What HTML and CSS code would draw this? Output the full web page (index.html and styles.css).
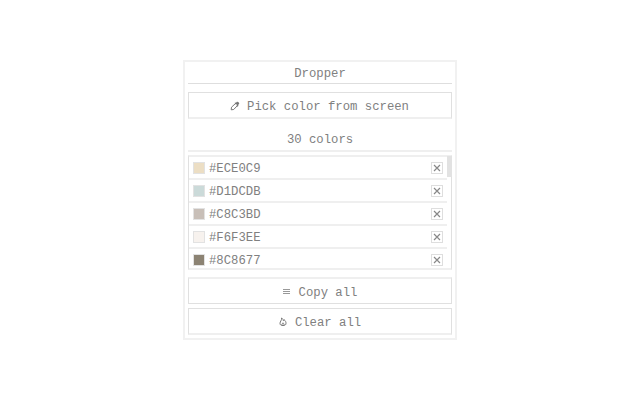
FILE: index.html
```html
<!DOCTYPE html>
<html lang="en">

<head>
    <meta charset="UTF-8">
    <meta name="viewport" content="width=device-width, initial-scale=1.0">
    <link rel="stylesheet" href="styles.css">
    <title>Dropper</title>
</head>

<body>
    <div class="popup">
        <h1 class="title">Dropper</h1>
        <button class="button pick">
            <svg class="icon" viewBox="0 0 10 10">
                <path d="M1.2 8.8l.3-2.6L6 2l2 2-4.3 4.5L1.2 8.8z" />
                <path class="solid" d="M4.8 1.6l1.2.1.9-.9c.8-.7 2.9 1.2 2.2 2.1l-.9.9.1 1.2-.8.8-1-1 .5-.8-1-1-.8.5z" />
            </svg>
            <span>Pick color from screen</span>
        </button>
        <h2 class="count">30 colors</h2>
        <div class="list">
            <ul class="colors">
                <li class="color">
                    <span class="swatch" style="background-color: #ECDEC4"></span>
                    <span class="hex">#ECE0C9</span>
                    <button class="remove"><svg viewBox="0 0 8 8"><path d="M1 1l6 6M7 1L1 7" /></svg></button>
                </li>
                <li class="color">
                    <span class="swatch" style="background-color: #CBDAD9"></span>
                    <span class="hex">#D1DCDB</span>
                    <button class="remove"><svg viewBox="0 0 8 8"><path d="M1 1l6 6M7 1L1 7" /></svg></button>
                </li>
                <li class="color">
                    <span class="swatch" style="background-color: #C8BFB8"></span>
                    <span class="hex">#C8C3BD</span>
                    <button class="remove"><svg viewBox="0 0 8 8"><path d="M1 1l6 6M7 1L1 7" /></svg></button>
                </li>
                <li class="color">
                    <span class="swatch" style="background-color: #F7F2EE"></span>
                    <span class="hex">#F6F3EE</span>
                    <button class="remove"><svg viewBox="0 0 8 8"><path d="M1 1l6 6M7 1L1 7" /></svg></button>
                </li>
                <li class="color">
                    <span class="swatch" style="background-color: #8C8373"></span>
                    <span class="hex">#8C8677</span>
                    <button class="remove"><svg viewBox="0 0 8 8"><path d="M1 1l6 6M7 1L1 7" /></svg></button>
                </li>
            </ul>
            <div class="scrollbar">
                <div class="thumb"></div>
            </div>
        </div>
        <button class="button copy">
            <svg class="icon lines" viewBox="0 0 10 10">
                <path d="M1 2.5h7M1 4.5h7M1 6.5h7" />
            </svg>
            <span>Copy all</span>
        </button>
        <button class="button clear">
            <svg class="icon" viewBox="0 0 10 10">
                <path d="M3.6 1c1.2.7 1.7 1.5 1.7 2.7.5-.2.7-.5.8-1C7.5 3.8 8 4.9 8 6.2 8 8 6.8 8.5 5 8.5S2 8 2 6.3C2 4.5 3.9 3.3 3.6 1z" />
                <path d="M4 8.3C3.5 7.3 4.5 6.6 5 5.8c.8 1 1.4 1.7.8 2.5" />
            </svg>
            <span>Clear all</span>
        </button>
    </div>
</body>

</html>
```

FILE: styles.css
```css
* {
    box-sizing: border-box;
}

body {
    height: 400px;
    margin: 0;
    padding-top: 60px;
    overflow: hidden;
    background-color: #fff;
    color: #808080;
    font: 12.27px/16px "Liberation Mono", monospace;
}

.popup {
    display: flex;
    flex-direction: column;
    width: 274px;
    height: 280px;
    margin-left: 183px;
    padding: 0 3px;
    border: 2px solid #f1f1f1;
}

.title,
.count {
    margin: 0;
    font-size: inherit;
    font-weight: normal;
    text-align: center;
}

.title {
    height: 22px;
    padding-top: 4px;
    border-bottom: 1px solid #dedede;
}

.count {
    height: 22px;
    margin-top: 11px;
    padding-top: 2px;
    border-bottom: 2px solid #efefef;
}

.button {
    display: flex;
    align-items: center;
    justify-content: center;
    gap: 7px;
    height: 27px;
    padding: 3px 1px 0 0;
    border: 1px solid #e0e0e0;
    background-color: #fff;
    color: inherit;
    font: inherit;
}

.pick {
    margin-top: 8px;
    border-bottom: 2px solid #efefef;
}

.copy {
    margin-top: 7px;
    border-top: 2px solid #efefef;
}

.clear {
    margin-top: 4px;
    border-bottom: 2px solid #efefef;
}

.icon {
    width: 10px;
    height: 10px;
    margin-bottom: 2px;
    fill: none;
    stroke: #777;
    stroke-width: 1;
}

.icon .solid {
    fill: #777;
    stroke: none;
}

.icon.lines {
    stroke: #999;
}

.list {
    display: flex;
    height: 115px;
    margin-top: 3px;
    border: 1px solid #e0e0e0;
    border-top: 2px solid #efefef;
    border-bottom: 2px solid #efefef;
}

.colors {
    flex: 1;
    margin: 0;
    padding: 0;
    overflow: hidden;
    list-style: none;
}

.color {
    display: flex;
    align-items: center;
    height: 23px;
    padding: 0 4px;
    border-bottom: 2px solid #efefef;
}

.swatch {
    width: 12px;
    height: 12px;
    margin-right: 4px;
    border: 1px solid #e2e2e2;
}

.hex {
    flex: 1;
    padding-top: 2px;
}

.remove {
    display: flex;
    align-items: center;
    justify-content: center;
    width: 12px;
    height: 12px;
    padding: 0;
    border: 1px solid #dedede;
    background-color: #fff;
}

.remove svg {
    width: 8px;
    height: 8px;
    fill: none;
    stroke: #888;
    stroke-width: 1.2;
}

.scrollbar {
    flex: none;
    width: 4px;
    margin-top: -1px;
}

.thumb {
    width: 5px;
    height: 21px;
    background-color: #e2e2e2;
}
```
